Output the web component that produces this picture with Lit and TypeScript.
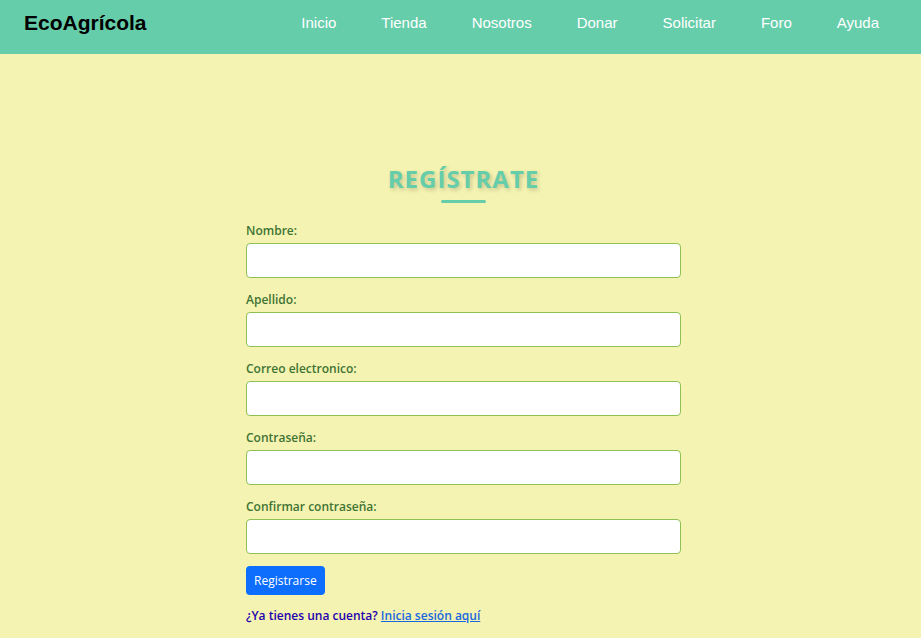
import { LitElement, html, css } from "lit";
import { customElement } from "lit/decorators.js";

const NAV = ["Inicio", "Tienda", "Nosotros", "Donar", "Solicitar", "Foro", "Ayuda"];

const FIELDS = [
  { id: "nombre", label: "Nombre:", type: "text" },
  { id: "apellido", label: "Apellido:", type: "text" },
  { id: "correo", label: "Correo electronico:", type: "email" },
  { id: "clave", label: "Contraseña:", type: "password" },
  { id: "confirmar", label: "Confirmar contraseña:", type: "password" },
];

@customElement("app-root")
export class AppRoot extends LitElement {
  static styles = css`
    :host {
      display: block;
      min-height: 100vh;
      background: #f5f3b1;
      font-family: "Open Sans", "Noto Sans", sans-serif;
      font-size: 12px;
      line-height: 18px;
    }
    * {
      box-sizing: border-box;
    }
    .bar {
      display: flex;
      justify-content: space-between;
      align-items: flex-start;
      height: 54px;
      padding: 11px 42px 0 24px;
      background: #66cdaa;
      font-family: "Liberation Sans", Arial, sans-serif;
      line-height: 24px;
    }
    .brand {
      color: #000;
      font-size: 21px;
      font-weight: 700;
      text-decoration: none;
    }
    .menu {
      display: flex;
      gap: 45px;
      margin: 0;
      padding: 0;
      list-style: none;
    }
    .menu a {
      color: #fff;
      font-size: 15px;
      text-decoration: none;
    }
    main {
      padding: 108px 0 12px 6px;
    }
    .panel {
      width: 100%;
      max-width: 435px;
      margin: 0 auto;
    }
    .title {
      display: flex;
      flex-direction: column;
      align-items: center;
      gap: 4px;
      margin: 0 0 19px;
      color: #66cdaa;
      font-size: 24px;
      font-weight: 700;
      line-height: 34px;
      letter-spacing: 1px;
      text-transform: uppercase;
      text-shadow: 2px 2px 4px rgba(0, 0, 0, 0.2);
    }
    .title::after {
      content: "";
      width: 45px;
      height: 3px;
      border-radius: 2px;
      background: #66cdaa;
    }
    .field {
      display: flex;
      flex-direction: column;
      gap: 3px;
      margin-bottom: 13px;
    }
    .field:last-of-type {
      margin-bottom: 12px;
    }
    .field label {
      color: #3f7434;
      font-weight: 600;
    }
    .field input {
      width: 100%;
      height: 35px;
      padding: 6px 12px;
      border: 1px solid #8fc054;
      border-radius: 4px;
      background: #fff;
      font: inherit;
    }
    .send {
      display: block;
      height: 29px;
      padding: 1px 8px 0;
      border: 0;
      border-radius: 4px;
      background: #0d6efd;
      color: #fff;
      font: inherit;
    }
    .login {
      margin: 12px 0 0;
      color: #1d00b0;
      font-weight: 600;
    }
    .login a {
      color: #1a68e0;
    }
  `;

  render() {
    return html`
      <header class="bar">
        <a class="brand" href="#">EcoAgrícola</a>
        <nav>
          <ul class="menu">
            ${NAV.map((n) => html`<li><a href="#">${n}</a></li>`)}
          </ul>
        </nav>
      </header>
      <main>
        <section class="panel">
          <h1 class="title">Regístrate</h1>
          <form @submit=${(e: Event) => e.preventDefault()}>
            ${FIELDS.map(
              (f) => html`<div class="field">
                <label for=${f.id}>${f.label}</label>
                <input id=${f.id} name=${f.id} type=${f.type} />
              </div>`
            )}
            <button class="send" type="submit">Registrarse</button>
          </form>
          <p class="login">¿Ya tienes una cuenta? <a href="#">Inicia sesión aquí</a></p>
        </section>
      </main>
    `;
  }
}
